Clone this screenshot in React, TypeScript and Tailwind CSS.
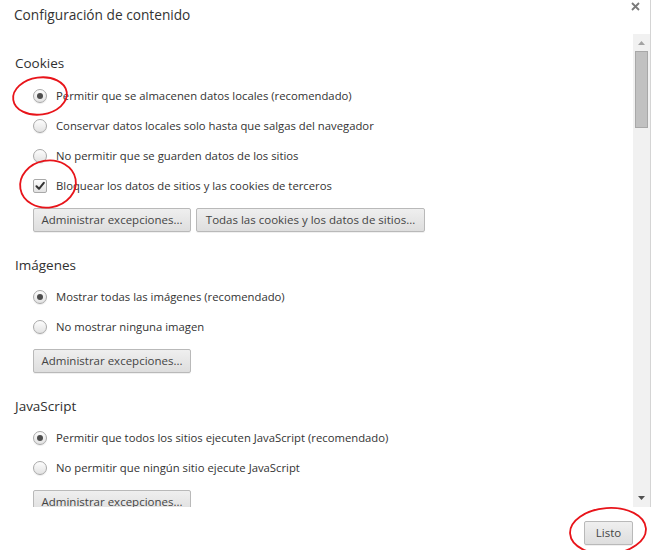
import React from "react";

const font = { fontFamily: '"Open Sans", "Noto Sans", Arial, sans-serif' };

function Radio({ checked }: { checked?: boolean }) {
  return (
    <span className="relative flex h-[14px] w-[14px] shrink-0 items-center justify-center rounded-full border border-[#a9a9a9] bg-gradient-to-b from-[#fdfdfd] to-[#e2e2e2] shadow-[0_1px_1px_rgba(0,0,0,0.08)]">
      {checked && <span className="h-[6px] w-[6px] rounded-full bg-[#4d4d4d]" />}
    </span>
  );
}

function Check({ checked }: { checked?: boolean }) {
  return (
    <span className="relative flex h-[14px] w-[14px] shrink-0 items-center justify-center rounded-[2px] border border-[#a9a9a9] bg-gradient-to-b from-[#fdfdfd] to-[#e2e2e2]">
      {checked && (
        <svg width="10" height="10" viewBox="0 0 10 10">
          <path d="M1.5 5.2 L4 7.8 L8.8 1.8" fill="none" stroke="#333" strokeWidth="2" strokeLinecap="round" strokeLinejoin="round" />
        </svg>
      )}
    </span>
  );
}

function Row({ label, checked, box }: { label: string; checked?: boolean; box?: boolean }) {
  return (
    <div className="flex h-[30px] items-center pl-[33px]">
      {box ? <Check checked={checked} /> : <Radio checked={checked} />}
      <span className="ml-[9px] text-[11.3px] text-[#333] whitespace-nowrap">{label}</span>
    </div>
  );
}

function Btn({ children, w }: { children: React.ReactNode; w?: string }) {
  return (
    <button className={`flex h-[24px] items-center justify-center rounded-[2px] border border-[#b9b9b9] bg-gradient-to-b from-[#efefef] to-[#dedede] px-[10px] text-[11.5px] text-[#444] shadow-[0_1px_0_rgba(0,0,0,0.06)] whitespace-nowrap ${w ?? ""}`}>
      {children}
    </button>
  );
}

function Section({ title, children, buttons, first }: { title: string; children: React.ReactNode; buttons: React.ReactNode; first?: boolean }) {
  return (
    <div className="mb-[23px]">
      <div className="h-[20px] pl-[15px] text-[13.5px] leading-[20px] text-[#303030]">{title}</div>
      <div className={first ? "mt-[8px]" : "mt-[7px]"}>{children}</div>
      <div className="mt-[7px] flex gap-[5px] pl-[33px]">{buttons}</div>
    </div>
  );
}

export default function App() {
  return (
    <div className="relative h-[550px] w-[651px] overflow-hidden bg-white" style={font}>
      <div className="border-r border-[#d4d4d4]">
        <div className="flex h-[34px] items-start justify-between">
          <div className="pl-[14px] pt-[5px] text-[13.7px] leading-[20px] text-[#333]">Configuración de contenido</div>
          <svg className="mr-[10px] mt-[2px]" width="9" height="9" viewBox="0 0 9 9">
            <path d="M1 1 L8 8 M8 1 L1 8" stroke="#7a7a7a" strokeWidth="1.8" />
          </svg>
        </div>
        <div className="flex h-[473px]">
          <div className="flex-1 overflow-hidden pt-[19px]">
            <Section
              first
              title="Cookies"
              buttons={
                <>
                  <Btn w="w-[158px]">Administrar excepciones...</Btn>
                  <Btn w="w-[229px]">Todas las cookies y los datos de sitios...</Btn>
                </>
              }
            >
              <Row checked label="Permitir que se almacenen datos locales (recomendado)" />
              <Row label="Conservar datos locales solo hasta que salgas del navegador" />
              <Row label="No permitir que se guarden datos de los sitios" />
              <Row box checked label="Bloquear los datos de sitios y las cookies de terceros" />
            </Section>
            <Section title="Imágenes" buttons={<Btn w="w-[158px]">Administrar excepciones...</Btn>}>
              <Row checked label="Mostrar todas las imágenes (recomendado)" />
              <Row label="No mostrar ninguna imagen" />
            </Section>
            <Section title="JavaScript" buttons={<Btn w="w-[158px]">Administrar excepciones...</Btn>}>
              <Row checked label="Permitir que todos los sitios ejecuten JavaScript (recomendado)" />
              <Row label="No permitir que ningún sitio ejecute JavaScript" />
            </Section>
          </div>
          <div className="flex w-[17px] flex-col items-center bg-[#f1f1f1]">
            <svg className="mt-[7px]" width="7" height="4" viewBox="0 0 7 4">
              <path d="M0 4 L3.5 0 L7 4 Z" fill="#a3a3a3" />
            </svg>
            <div className="mt-[6px] h-[77px] w-[13px] border border-[#a8a8a8] bg-[#c1c1c1]" />
            <div className="flex-1" />
            <svg className="mb-[7px]" width="7" height="4" viewBox="0 0 7 4">
              <path d="M0 0 L7 0 L3.5 4 Z" fill="#505050" />
            </svg>
          </div>
        </div>
      </div>
      <div className="flex h-[43px] justify-end pr-[18px] pt-[14px]">
        <Btn w="w-[49px]">Listo</Btn>
      </div>
      <svg className="pointer-events-none absolute inset-0" width="651" height="550" viewBox="0 0 651 550">
        <ellipse cx="40" cy="96" rx="27" ry="18.5" transform="rotate(-8 40 96)" fill="none" stroke="#e8141a" strokeWidth="1.8" />
        <ellipse cx="48" cy="184" rx="28" ry="23.5" transform="rotate(-10 48 184)" fill="none" stroke="#e8141a" strokeWidth="1.8" />
        <ellipse cx="608" cy="531" rx="38" ry="23" transform="rotate(-4 608 531)" fill="none" stroke="#e8141a" strokeWidth="1.8" />
      </svg>
    </div>
  );
}
